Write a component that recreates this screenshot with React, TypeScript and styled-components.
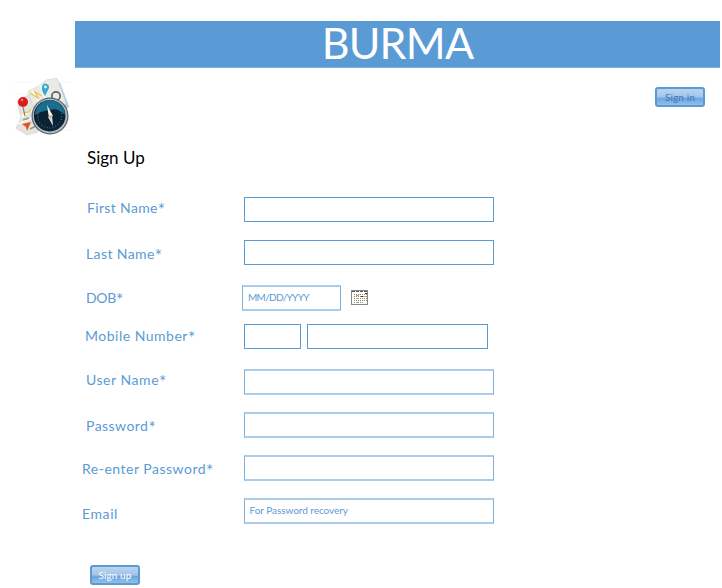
import React from "react";
import styled, { createGlobalStyle } from "styled-components";

const Global = createGlobalStyle`
  * { box-sizing: border-box; }
  body { margin: 0; background: #fff; font-family: Lato, "Open Sans", sans-serif; overflow: hidden; }
`;

const Page = styled.main`
  width: 722px;
  height: 588px;
  padding-top: 21px;
  display: flex;
  flex-direction: column;
`;
const Banner = styled.header`
  margin: 0 2px 0 75px;
  height: 47px;
  flex: none;
  background: #5b9bd5;
  border-bottom: 1px solid #7fb2e0;
  display: flex;
  justify-content: center;
`;
const Brand = styled.h1`
  margin: 0;
  color: #fff;
  font-size: 43px;
  line-height: 44px;
  font-weight: 400;
  letter-spacing: -0.8px;
`;
const TopBar = styled.div`
  display: flex;
  justify-content: space-between;
  height: 76px;
  flex: none;
  padding: 10px 17px 0 15px;
`;
const Button = styled.button<{ $ink: string }>`
  display: block;
  width: 50px;
  height: 20px;
  padding: 0 0 1px;
  border: 2px solid #5b9bd5;
  border-radius: 3px;
  background: linear-gradient(#b9d3ef 0%, #a3c5e8 50%, #6ba5db 58%, #93bfe8 100%);
  color: ${(p) => p.$ink};
  font: 10px/14px Lato, sans-serif;
  letter-spacing: 0.1px;
`;
const SignInSlot = styled.div`
  padding-top: 9px;
`;
const Title = styled.h2`
  margin: 0 0 0 87px;
  height: 53px;
  flex: none;
  font-size: 17px;
  line-height: 28px;
  font-weight: 400;
  color: #000;
`;
const Form = styled.form`
  display: flex;
  flex-direction: column;
`;
const Row = styled.div<{ $h: number }>`
  display: flex;
  align-items: flex-start;
  height: ${(p) => p.$h}px;
`;
const Label = styled.label<{ $x: number; $drop: number; $track: number; $w?: number }>`
  width: ${(p) => p.$w ?? 243.5}px;
  flex: none;
  padding-left: ${(p) => p.$x}px;
  padding-top: ${(p) => p.$drop}px;
  font-size: 14px;
  line-height: 20px;
  letter-spacing: ${(p) => p.$track}px;
  white-space: nowrap;
  color: #5b9bd5;
`;
const Star = styled.span`
  font-size: 17px;
  line-height: 0;
  vertical-align: -3px;
`;
const Field = styled.input<{ $w?: number; $h?: number; $soft?: boolean; $track?: number }>`
  width: ${(p) => p.$w ?? 250}px;
  height: ${(p) => p.$h ?? 25}px;
  padding: 0 0 3px 5px;
  border: solid;
  border-width: ${(p) => (p.$soft ? "2px 1px" : "1px")};
  border-color: ${(p) => (p.$soft ? "#abcdea #7fb0de" : "#5b9bd5")};
  border-radius: 0;
  outline: none;
  background: #fff;
  font: 10px Lato, sans-serif;
  letter-spacing: ${(p) => p.$track ?? 0}px;
  color: #5b9bd5;
  &::placeholder { color: #5b9bd5; opacity: 1; }
`;
const Phone = styled.div`
  display: flex;
  gap: 6px;
`;
const CalendarSlot = styled.span`
  padding: 5px 0 0 10px;
  line-height: 0;
`;
const Submit = styled.div`
  padding-left: 90px;
`;

const Logo = () => (
  <svg width="57" height="60" viewBox="0 0 57 60">
    <path d="M0 4H19M40 4H55M0 16H16M43 16H55M0 28H5M0 40H5M51 40H55M0 52H8M46 52H55" stroke="#f1f1f1" strokeWidth=".7" />
    <path d="M33 10L45 5 54 29 44 34Z" fill="#a9cbe0" stroke="#c9d5dc" strokeWidth=".6" />
    <path d="M13 13L22 9 31 2 42 0 51 25 39 38 20 43Z" fill="#ebeae4" stroke="#d0d0cc" strokeWidth=".6" />
    <path d="M2 23L14 17 22 40 23 54 12 57 1 50 6 40Z" fill="#e4e5df" stroke="#cccac5" strokeWidth=".6" />
    <path d="M17 12L25 25 34 33M25 7L31 22 44 28M3 46L22 38M6 39L19 31" stroke="#fafafa" strokeWidth="1.8" fill="none" />
    <path d="M15 15L23 20 20 14 27 18M8 34Q14 36 16 31" stroke="#efc55b" strokeWidth="1.4" fill="none" />
    <path d="M30 18Q26 12 27 9Q28 4 32 6Q36 8 32 14Z" fill="#36a8cc" />
    <circle cx="30.5" cy="9" r="1.4" fill="#eefaff" />
    <path d="M8 29L10 38" stroke="#777" strokeWidth="1" />
    <circle cx="8" cy="24" r="5" fill="#d91c1c" />
    <circle cx="7" cy="22" r="1.3" fill="#fa7770" />
    <path d="M7 46L16 44 12 53 11 49Z" fill="#e45424" />
    <path d="M8 42L14 40M15 51L21 48" stroke="#8ea07b" strokeWidth="1.5" />
    <circle cx="41" cy="18" r="4.2" fill="none" stroke="#5d646b" strokeWidth="1.7" />
    <path d="M38 22H43V27H37Z" fill="#3f4950" />
    <circle cx="35" cy="38" r="18.5" fill="#59636b" />
    <circle cx="35" cy="38" r="17.3" fill="#b4bdc2" />
    <circle cx="34.7" cy="37.7" r="15.8" fill="#0b2232" />
    <path d="M20 37A15 15 0 0 1 50 37Q42 29 35 32Q26 33 20 37" fill="#176b8c" />
    <circle cx="34.7" cy="38" r="12" fill="none" stroke="#457a90" strokeWidth="1.4" strokeDasharray=".8 2.2" />
    <path d="M32 27L38 38 34 40Z" fill="#f5f5ef" />
    <path d="M37 37L38 48 33 39Z" fill="#d5dfe2" />
    <circle cx="35.5" cy="38.5" r="1.3" fill="#d1af7a" />
  </svg>
);

const Calendar = () => (
  <svg width="18" height="16" viewBox="0 0 18 16" shapeRendering="crispEdges">
    <rect x=".5" y=".5" width="16" height="14" fill="#fff" stroke="#888" />
    <path d="M1 1.5H17" stroke="#555" strokeDasharray="3 1" />
    <path d="M3 4.5H16M3 6.5H16M3 8.5H16M3 10.5H16M3 12.5H12" stroke="#8b8984" strokeDasharray="1 1" />
    <path d="M5 5.5H8M12 6.5H15M5 8.5H8M5 12.5H7" stroke="#e79a62" />
    <path d="M10 6.5H12M14 3.5H16" stroke="#542c25" />
  </svg>
);

export default function App() {
  return (
    <Page>
      <Global />
      <Banner><Brand>BURMA</Brand></Banner>
      <TopBar>
        <Logo />
        <SignInSlot><Button type="button" $ink="#3f77bd">Sign in</Button></SignInSlot>
      </TopBar>
      <Title>Sign Up</Title>
      <Form>
        <Row $h={43}><Label $x={87} $drop={1} $track={0.35}>First Name<Star>*</Star></Label><Field /></Row>
        <Row $h={45}><Label $x={86} $drop={4} $track={0.4}>Last Name<Star>*</Star></Label><Field /></Row>
        <Row $h={39}>
          <Label $x={86} $drop={3} $track={-0.3} $w={242}>DOB<Star>*</Star></Label>
          <Field $w={99} $h={26} $soft $track={-0.7} placeholder="MM/DD/YYYY" />
          <CalendarSlot><Calendar /></CalendarSlot>
        </Row>
        <Row $h={45}>
          <Label $x={85} $drop={2} $track={0.5}>Mobile Number<Star>*</Star></Label>
          <Phone><Field $w={57} /><Field $w={181.5} /></Phone>
        </Row>
        <Row $h={43}><Label $x={86} $drop={1} $track={0.55}>User Name<Star>*</Star></Label><Field $h={26} $soft /></Row>
        <Row $h={43}><Label $x={86} $drop={4} $track={0.45}>Password<Star>*</Star></Label><Field $h={26} $soft /></Row>
        <Row $h={43}><Label $x={82} $drop={4} $track={0.5}>Re-enter Password<Star>*</Star></Label><Field $h={26} $soft /></Row>
        <Row $h={67}><Label $x={82} $drop={6} $track={0.6}>Email</Label><Field $h={26} $soft $track={-0.05} placeholder="For Password recovery" /></Row>
        <Submit><Button type="button" $ink="#fff">Sign up</Button></Submit>
      </Form>
    </Page>
  );
}
